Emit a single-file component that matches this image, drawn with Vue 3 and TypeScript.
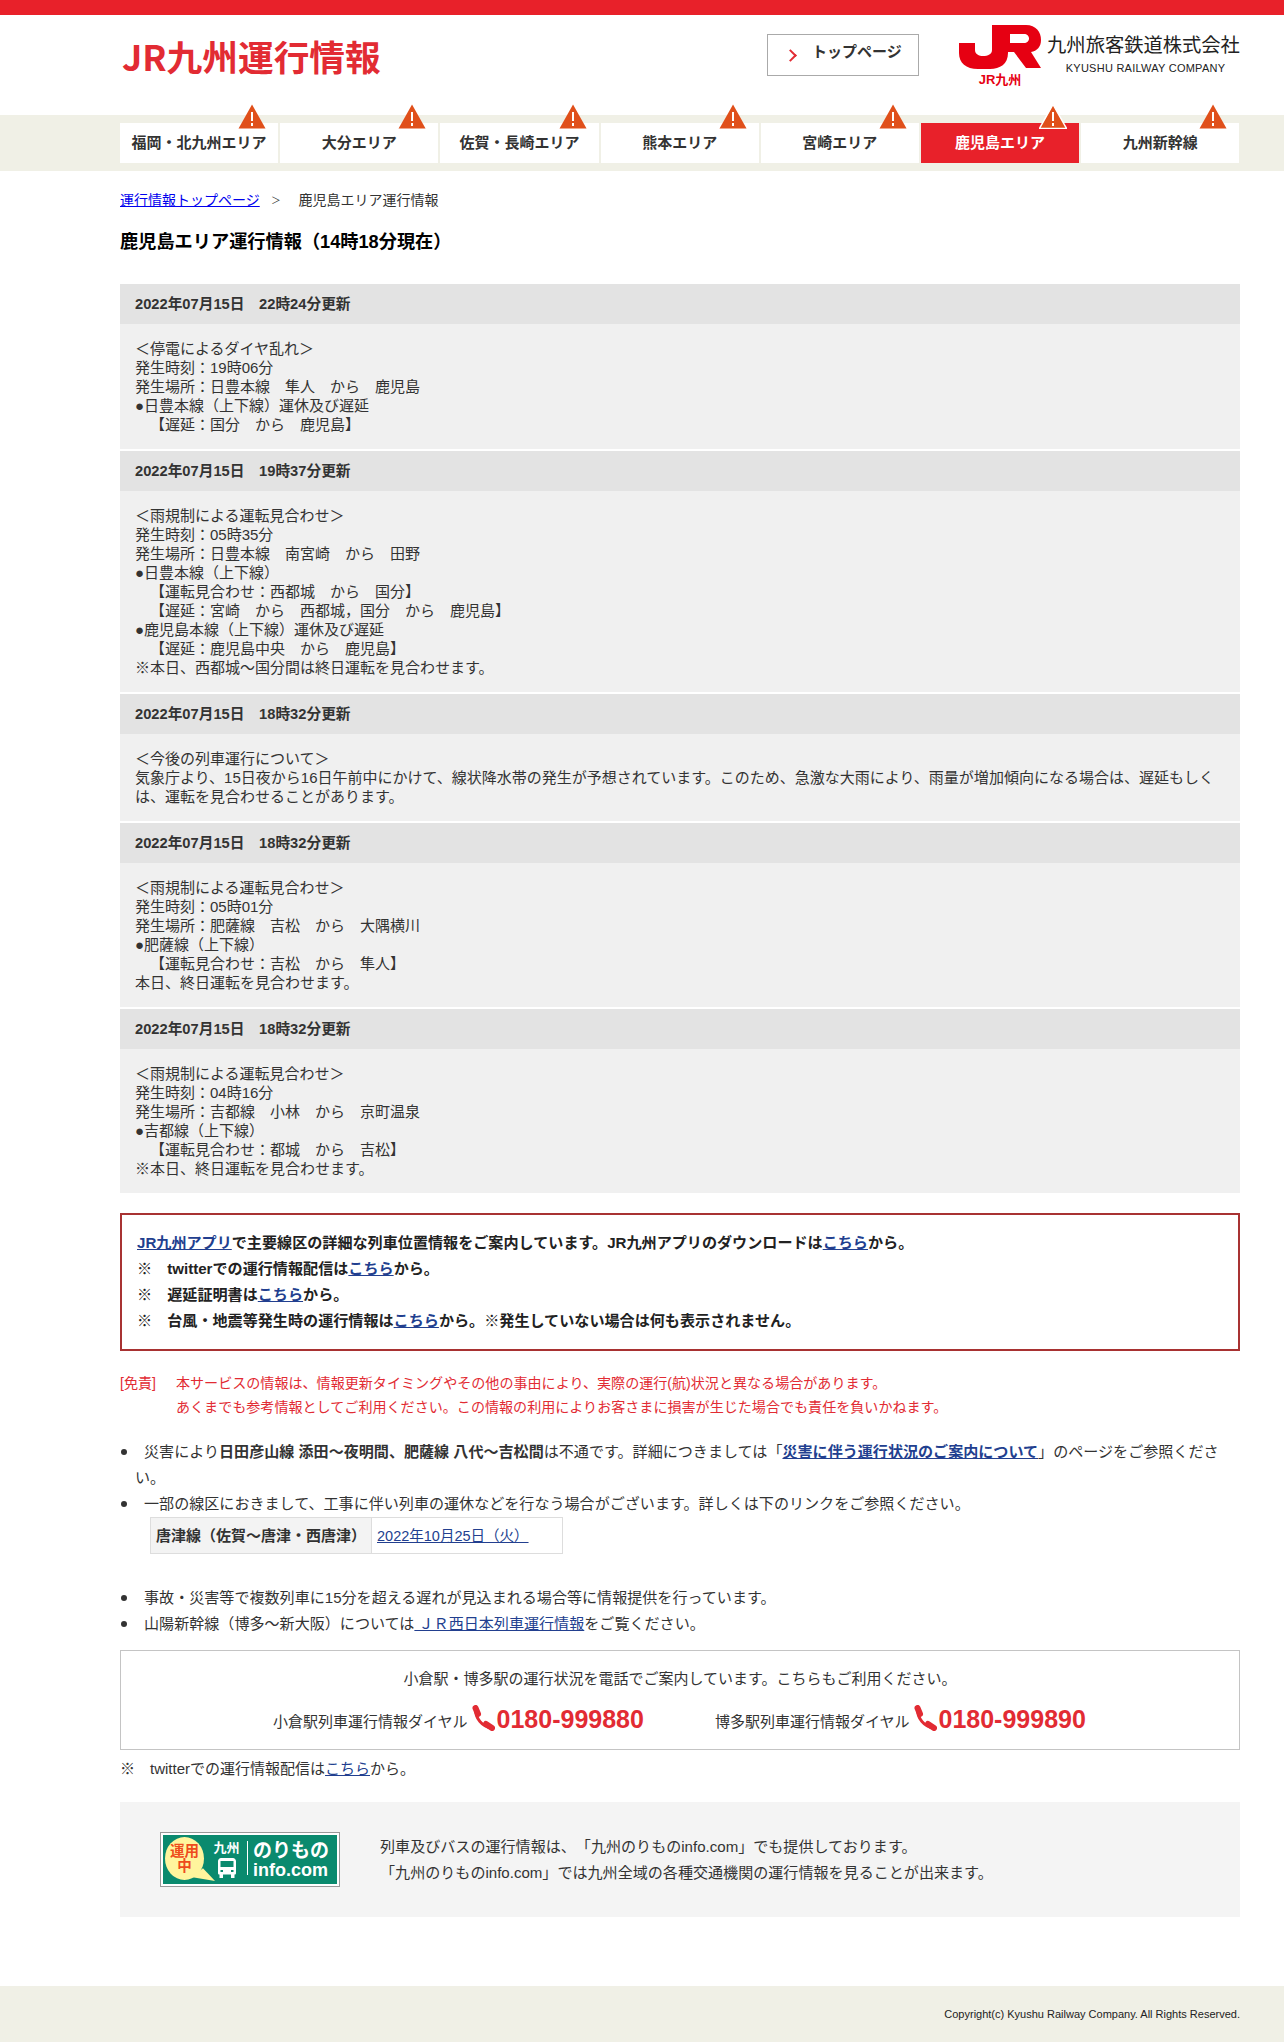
<template>
  <div class="page">
    <div class="top-line"></div>

    <header class="wrap header">
      <h1 class="site-title">JR九州運行情報</h1>
      <a class="top-btn"><span class="chev"></span>トップページ</a>
      <div class="logo">
        <div class="logo-mark">
          <svg width="82" height="44" viewBox="9 5 82 44">
            <path
              fill="#e60012"
              fill-rule="evenodd"
              d="M42 5H76C86 5 91 12 91 20C91 27 87 31 81 32L91 48H76L64 32H58V33C58 44 50 49 40 49H28C16 49 9 43 9 33V23H25V30C25 34 29 36 33 36C38 36 42 34 42 30ZM60 14V23H74C77 23 79 21 79 18.5C79 16 77 14 74 14Z"
            />
          </svg>
          <span class="logo-sub">JR九州</span>
        </div>
        <div class="logo-name">
          <span class="name-ja">九州旅客鉄道株式会社</span>
          <span class="name-en">KYUSHU RAILWAY COMPANY</span>
        </div>
      </div>
    </header>

    <nav class="nav-band">
      <ul class="wrap nav">
        <li v-for="area in areas" :key="area" class="nav-item" :class="{ active: area === '鹿児島エリア' }">
          {{ area }}
          <svg class="alert" width="28" height="25" viewBox="0 0 28 25">
            <path
              d="M14 .5L27.5 24.5H.5Z"
              fill="#e04f1a"
              :stroke="area === '鹿児島エリア' ? '#fff' : 'none'"
              stroke-width="1.5"
            />
            <path d="M14 8V17M14 19V22" stroke="#fff" stroke-width="2" />
          </svg>
        </li>
      </ul>
    </nav>

    <main class="wrap">
      <p class="crumb">
        <a href="#" class="crumb-link">運行情報トップページ</a>
        <span class="crumb-sep">＞</span>
        鹿児島エリア運行情報
      </p>
      <h2 class="page-title">鹿児島エリア運行情報（14時18分現在）</h2>

      <section v-for="(item, i) in notices" :key="i" class="notice">
        <h3 class="notice-date">{{ item.date }}</h3>
        <div class="notice-body">
          <div v-for="(line, j) in item.lines" :key="j">{{ line }}</div>
        </div>
      </section>

      <div class="app-box">
        <p><a class="lnk">JR九州アプリ</a>で主要線区の詳細な列車位置情報をご案内しています。JR九州アプリのダウンロードは<a class="lnk">こちら</a>から。</p>
        <p>※　twitterでの運行情報配信は<a class="lnk">こちら</a>から。</p>
        <p>※　遅延証明書は<a class="lnk">こちら</a>から。</p>
        <p>※　台風・地震等発生時の運行情報は<a class="lnk">こちら</a>から。※発生していない場合は何も表示されません。</p>
      </div>

      <div class="disclaimer">
        <span class="disclaimer-label">[免責]</span>
        <div>
          本サービスの情報は、情報更新タイミングやその他の事由により、実際の運行(航)状況と異なる場合があります。<br />
          あくまでも参考情報としてご利用ください。この情報の利用によりお客さまに損害が生じた場合でも責任を負いかねます。
        </div>
      </div>

      <ul class="notes">
        <li>
          <span class="dot"></span>災害により<b>日田彦山線 添田～夜明間、肥薩線 八代～吉松間</b>は不通です。詳細につきましては「<a class="lnk"><b>災害に伴う運行状況のご案内について</b></a>」のページをご参照ください。
        </li>
        <li>
          <span class="dot"></span>一部の線区におきまして、工事に伴い列車の運休などを行なう場合がございます。詳しくは下のリンクをご参照ください。
          <table class="works">
            <tbody>
              <tr>
                <th>唐津線（佐賀～唐津・西唐津）</th>
                <td><a class="lnk">2022年10月25日（火）</a></td>
              </tr>
            </tbody>
          </table>
        </li>
        <li class="gap-top">
          <span class="dot"></span>事故・災害等で複数列車に15分を超える遅れが見込まれる場合等に情報提供を行っています。
        </li>
        <li>
          <span class="dot"></span>山陽新幹線（博多～新大阪）については<a class="lnk">&nbsp;ＪＲ西日本列車運行情報</a>をご覧ください。
        </li>
      </ul>

      <div class="phone-box">
        <p class="phone-lead">小倉駅・博多駅の運行状況を電話でご案内しています。こちらもご利用ください。</p>
        <div class="phone-row">
          <div v-for="p in phones" :key="p.number" class="phone">
            <span>{{ p.label }}</span>
            <svg class="phone-icon" width="24" height="26" viewBox="0 0 24 26">
              <path d="M4.5 3C4 13 11 22 21 23" fill="none" stroke="#e22b33" stroke-width="3" />
              <path d="M4.5 3L7 9M15 19L21 23" stroke="#e22b33" stroke-width="6" stroke-linecap="round" />
            </svg>
            <strong class="phone-number">{{ p.number }}</strong>
          </div>
        </div>
      </div>

      <p class="twitter-note">※　twitterでの運行情報配信は<a class="lnk">こちら</a>から。</p>

      <div class="info-box">
        <div class="banner">
          <div class="bubble">
            <i class="bubble-tail"></i>
            <span>運用</span>
            <span>中</span>
          </div>
          <div class="banner-bus">
            <span>九州</span>
            <svg width="18" height="20" viewBox="0 0 18 20">
              <path
                fill="#fff"
                fill-rule="evenodd"
                d="M3 0H15C16.5 0 18 1.5 18 3V15C18 16 17.5 16.5 16.5 16.5V20H13V16.5H5V20H1.5V16.5C.5 16.5 0 16 0 15V3C0 1.5 1.5 0 3 0ZM2.5 3V9H15.5V3ZM2.5 12V14H5V12ZM13 12V14H15.5V12Z"
              />
            </svg>
          </div>
          <div class="banner-name">
            <span class="nori">のりもの</span>
            <span class="info-com">info.com</span>
          </div>
        </div>
        <p class="info-text">
          列車及びバスの運行情報は、「九州のりものinfo.com」でも提供しております。<br />
          「九州のりものinfo.com」では九州全域の各種交通機関の運行情報を見ることが出来ます。
        </p>
      </div>
    </main>

    <footer class="footer">
      <div class="wrap footer-inner">Copyright(c) Kyushu Railway Company. All Rights Reserved.</div>
    </footer>
  </div>
</template>

<script setup lang="ts">
const areas: string[] = [
  "福岡・北九州エリア",
  "大分エリア",
  "佐賀・長崎エリア",
  "熊本エリア",
  "宮崎エリア",
  "鹿児島エリア",
  "九州新幹線",
];

const notices = [
  {
    date: "2022年07月15日　22時24分更新",
    lines: [
      "＜停電によるダイヤ乱れ＞",
      "発生時刻：19時06分",
      "発生場所：日豊本線　隼人　から　鹿児島",
      "●日豊本線（上下線）運休及び遅延",
      "　【遅延：国分　から　鹿児島】",
    ],
  },
  {
    date: "2022年07月15日　19時37分更新",
    lines: [
      "＜雨規制による運転見合わせ＞",
      "発生時刻：05時35分",
      "発生場所：日豊本線　南宮崎　から　田野",
      "●日豊本線（上下線）",
      "　【運転見合わせ：西都城　から　国分】",
      "　【遅延：宮崎　から　西都城，国分　から　鹿児島】",
      "●鹿児島本線（上下線）運休及び遅延",
      "　【遅延：鹿児島中央　から　鹿児島】",
      "※本日、西都城～国分間は終日運転を見合わせます。",
    ],
  },
  {
    date: "2022年07月15日　18時32分更新",
    lines: [
      "＜今後の列車運行について＞",
      "気象庁より、15日夜から16日午前中にかけて、線状降水帯の発生が予想されています。このため、急激な大雨により、雨量が増加傾向になる場合は、遅延もしくは、運転を見合わせることがあります。",
    ],
  },
  {
    date: "2022年07月15日　18時32分更新",
    lines: [
      "＜雨規制による運転見合わせ＞",
      "発生時刻：05時01分",
      "発生場所：肥薩線　吉松　から　大隅横川",
      "●肥薩線（上下線）",
      "　【運転見合わせ：吉松　から　隼人】",
      "本日、終日運転を見合わせます。",
    ],
  },
  {
    date: "2022年07月15日　18時32分更新",
    lines: [
      "＜雨規制による運転見合わせ＞",
      "発生時刻：04時16分",
      "発生場所：吉都線　小林　から　京町温泉",
      "●吉都線（上下線）",
      "　【運転見合わせ：都城　から　吉松】",
      "※本日、終日運転を見合わせます。",
    ],
  },
];

const phones = [
  { label: "小倉駅列車運行情報ダイヤル", number: "0180-999880" },
  { label: "博多駅列車運行情報ダイヤル", number: "0180-999890" },
];
</script>

<style>
body {
  background: #fff;
}
</style>

<style scoped>
.page {
  font-family: "Liberation Sans", "Noto Sans CJK JP", sans-serif;
  font-size: 15px;
  color: #333;
  width: 1284px;
  text-spacing-trim: space-all;
}

.wrap {
  width: 1120px;
  margin-left: 120px;
}

.top-line {
  height: 15px;
  background: #e8212a;
}

/* ヘッダー */
.header {
  height: 100px;
  display: flex;
  align-items: flex-start;
}

.site-title {
  margin: 18px 0 0 2px;
  font-size: 35.7px;
  line-height: 46px;
  font-weight: 700;
  color: #e22b33;
  font-family: "Noto Sans CJK JP", sans-serif;
}

.top-btn {
  margin: 19px 0 0 auto;
  width: 152px;
  height: 42px;
  box-sizing: border-box;
  border: 1px solid #aaa;
  display: flex;
  padding: 7px 0 0 44px;
  line-height: 20px;
  font-weight: bold;
  position: relative;
}

.chev {
  position: absolute;
  left: 18px;
  top: 16px;
  width: 7px;
  height: 7px;
  border-top: 2px solid #e22b33;
  border-right: 2px solid #e22b33;
  transform: rotate(45deg);
}

.logo {
  display: flex;
  margin: 10px 0 0 40px;
}

.logo-mark {
  width: 82px;
  display: flex;
  flex-direction: column;
  align-items: center;
}

.logo-mark svg {
  display: block;
}

.logo-sub {
  margin-top: 3px;
  font-size: 13px;
  line-height: 15px;
  font-weight: bold;
  color: #e60012;
}

.logo-name {
  margin: 9px 0 0 6px;
  display: flex;
  flex-direction: column;
  align-items: center;
  width: 193px;
  color: #222;
}

.name-ja {
  font-size: 19.3px;
  line-height: 24px;
  white-space: nowrap;
}

.name-en {
  margin: 3px 0 0 4px;
  font-size: 11px;
  line-height: 14px;
  letter-spacing: 0.25px;
}

/* ナビ */
.nav-band {
  height: 56px;
  box-sizing: border-box;
  padding-top: 8px;
  background: #f0f0e6;
}

.nav {
  display: flex;
  gap: 2px;
  list-style: none;
  margin-top: 0;
  margin-bottom: 0;
  padding: 0;
}

.nav-item {
  flex: none;
  width: 158.2px;
  height: 40px;
  line-height: 40px;
  background: #fff;
  text-align: center;
  font-weight: bold;
  position: relative;
}

.nav-item.active {
  background: #e8212a;
  color: #fff;
}

.alert {
  position: absolute;
  right: 12px;
  top: -19px;
}

/* 本文 */
.crumb {
  margin: 0;
  padding-top: 19px;
  font-size: 14px;
  line-height: 20px;
}

.crumb-link {
  color: #0000ee;
}

.crumb-sep {
  display: inline-block;
  margin: 0 12px 0 9px;
  transform: scale(0.7);
}

.page-title {
  margin: 20px 0 30px;
  font-size: 18.2px;
  line-height: 24px;
  color: #000;
}

.notice {
  margin-bottom: 2px;
}

.notice-date {
  margin: 0;
  height: 40px;
  line-height: 40px;
  padding-left: 15px;
  font-size: 14.7px;
  background: #e3e3e3;
}

.notice-body {
  padding: 15px;
  background: #f0f0f0;
  line-height: 19px;
}

.app-box {
  margin-top: 20px;
  height: 138px;
  box-sizing: border-box;
  padding: 15px;
  border: 2px solid #a83232;
  font-size: 15.1px;
  font-weight: bold;
  color: #222;
}

.app-box p {
  margin: 0;
  line-height: 26px;
}

.lnk {
  color: #223f8f;
  text-decoration: underline;
}

.disclaimer {
  margin-top: 20px;
  display: flex;
  color: #e22b33;
  font-size: 14.07px;
  line-height: 24px;
}

.disclaimer-label {
  width: 56px;
  flex: none;
}

.notes {
  list-style: none;
  margin: 20px 0 0;
  padding: 0 0 0 15px;
  font-size: 15.07px;
  line-height: 26px;
}

.notes li {
  text-indent: -15px;
}

.notes li.gap-top {
  margin-top: 31px;
}

.dot {
  display: inline-block;
  width: 6px;
  height: 6px;
  margin: 0 17px 2px 1px;
  border-radius: 50%;
  background: #333;
  vertical-align: middle;
}

.works {
  text-indent: 0;
  margin-left: 15px;
  border-collapse: collapse;
  font-size: 15px;
  line-height: 20px;
}

.works th,
.works td {
  height: 36px;
  box-sizing: border-box;
  border: 1px solid #ddd;
  padding: 0 5px;
  text-align: left;
}

.works th {
  width: 221px;
  background: #f3f3f3;
  white-space: nowrap;
}

.works td {
  width: 191px;
  font-size: 14.5px;
}

.phone-box {
  margin-top: 13px;
  height: 100px;
  box-sizing: border-box;
  border: 1px solid #c4c4c4;
  text-align: center;
}

.phone-lead {
  margin: 16px 0 0;
  line-height: 24px;
  font-size: 15px;
}

.phone-row {
  margin: 11px 0 0 152px;
  display: flex;
  gap: 71px;
  font-size: 15px;
}

.phone {
  display: flex;
  align-items: center;
  white-space: nowrap;
}

.phone > span {
  margin-top: 3px;
}

.phone-icon {
  margin: 0 2px 2px 3px;
}

.phone-number {
  font-size: 25px;
  line-height: 34px;
  color: #e22b33;
}

.twitter-note {
  margin: 6px 0 0;
  line-height: 26px;
}

.info-box {
  margin-top: 20px;
  height: 115px;
  background: #f4f4f4;
  display: flex;
  align-items: center;
  padding-left: 40px;
}

.banner {
  width: 180px;
  height: 55px;
  box-sizing: border-box;
  flex: none;
  border: 1px solid #999;
  background: #0a8a6e;
  box-shadow: inset 0 0 0 2px #fff;
  padding: 4px 3px 0 4px;
  display: flex;
  color: #fff;
  font-weight: bold;
}

.bubble {
  width: 39px;
  height: 43px;
  border-radius: 50%;
  background: #fff59d;
  color: #ee4b1c;
  font-size: 14.5px;
  line-height: 15px;
  display: flex;
  flex-direction: column;
  align-items: center;
  justify-content: center;
  position: relative;
}

.bubble span {
  white-space: nowrap;
  position: relative;
}

.bubble-tail {
  position: absolute;
  left: 26px;
  top: 28px;
  width: 24px;
  height: 16px;
  background: #fff59d;
  clip-path: polygon(50% 20%, 100% 100%, 0 75%);
}

.banner-bus {
  width: 31px;
  margin-left: 7px;
  display: flex;
  flex-direction: column;
  align-items: center;
  font-size: 13px;
  line-height: 16px;
  padding-top: 3px;
}

.banner-bus span {
  margin-bottom: 2px;
}

.banner-name {
  margin-left: 5px;
  padding: 1px 0 0 5px;
  border-left: 1px solid #fff;
  height: 33px;
  margin-top: 4px;
  display: flex;
  flex-direction: column;
}

.nori {
  font-size: 19px;
  line-height: 18px;
  white-space: nowrap;
}

.info-com {
  font-size: 18px;
  line-height: 20px;
  white-space: nowrap;
}

.info-text {
  margin: 0 0 0 40px;
  line-height: 26px;
  font-size: 15.07px;
}

.footer {
  margin-top: 69px;
  height: 56px;
  background: #f0f0e6;
}

.footer-inner {
  text-align: right;
  font-size: 11px;
  line-height: 56px;
  color: #222;
}
</style>
